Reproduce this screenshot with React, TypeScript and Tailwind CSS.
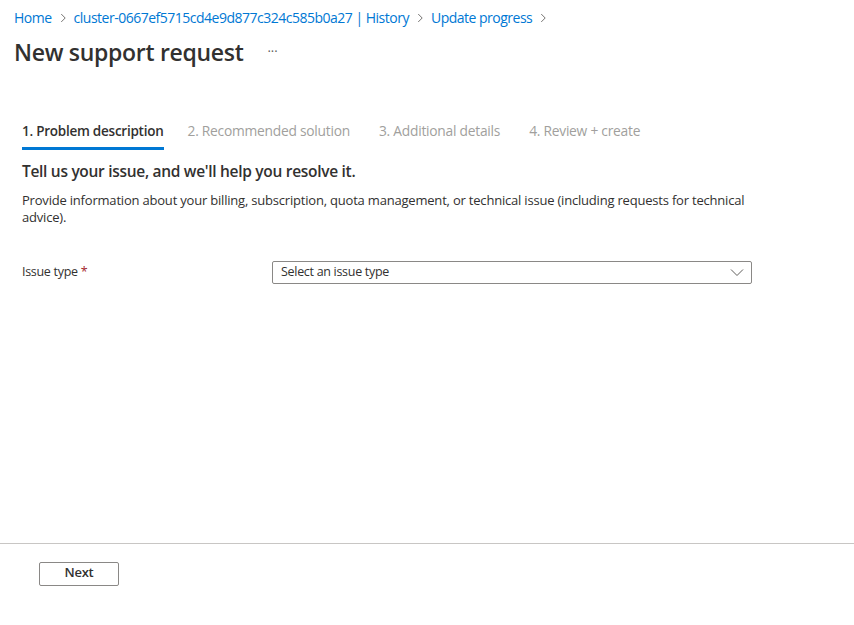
import React from 'react'

const Chevron = ({ className = '' }: { className?: string }) => (
  <svg viewBox="0 0 16 16" className={className} fill="none" stroke="currentColor" strokeWidth="1">
    <path d="M6 3.5 L10.5 8 L6 12.5" />
  </svg>
)

const App = () => {
  const tabs = ['1. Problem description', '2. Recommended solution', '3. Additional details', '4. Review + create']
  return (
    <div className="h-[625px] w-[854px] flex flex-col bg-white text-[#323130] font-['Open_Sans',sans-serif]">
      {/* HEADER */}
      <div className="pl-[14px] pt-[9px]">
        <div className="flex items-center text-[14px] leading-[18px] text-[#0078d4] tracking-[-0.5px]">
          <span>Home</span>
          <Chevron className="w-[14px] h-[14px] mx-[4px] text-[#605e5c]" />
          <span>cluster-0667ef5715cd4e9d877c324c585b0a27 | History</span>
          <Chevron className="w-[14px] h-[14px] mx-[4px] text-[#605e5c]" />
          <span>Update progress</span>
          <Chevron className="w-[14px] h-[14px] mx-[4px] text-[#605e5c]" />
        </div>
        <div className="flex items-center mt-[10px]">
          <h1 className="text-[23px] leading-[30px] font-semibold tracking-[-0.3px]">New support request</h1>
          <span className="ml-[24px] text-[13px] text-[#605e5c]">···</span>
        </div>
      </div>

      {/* MAIN */}
      <div className="flex-1 px-[22px] pt-[54px]">
        <div className="flex text-[13.5px] tracking-[-0.25px]">
          {tabs.map((t, i) => (
            <div
              key={t}
              className={
                i === 0
                  ? 'mr-[24px] pb-[5px] border-b-[3px] border-[#0078d4] font-semibold text-[#323130]'
                  : 'mr-[29px] pb-[5px] border-b-[3px] border-transparent text-[#a19f9d] text-[13.8px]'
              }
            >
              {t}
            </div>
          ))}
        </div>
        <h2 className="mt-[10px] text-[15.5px] font-semibold tracking-[-0.3px]">
          Tell us your issue, and we'll help you resolve it.
        </h2>
        <p className="mt-[9px] w-[740px] text-[13px] leading-[17px] tracking-[-0.2px]">
          Provide information about your billing, subscription, quota management, or technical issue (including requests for technical advice).
        </p>
        <div className="flex items-center mt-[35px]">
          <div className="w-[250px] text-[12.5px] tracking-[-0.3px]">
            Issue type <span className="text-[#a4262c]">*</span>
          </div>
          <div className="w-[480px] h-[23px] border border-[#8a8886] rounded-[2px] flex items-center justify-between pl-[8px] pr-[6px]">
            <span className="text-[12.5px] tracking-[-0.3px] text-[#323130]">Select an issue type</span>
            <svg viewBox="0 0 16 16" className="w-[16px] h-[16px] text-[#605e5c]" fill="none" stroke="currentColor" strokeWidth="1">
              <path d="M2 5.5 L8 11.5 L14 5.5" />
            </svg>
          </div>
        </div>
      </div>

      {/* FOOTER */}
      <div className="h-[82px] border-t border-[#c8c6c4] pl-[39px] pt-[18px]">
        <button className="w-[80px] h-[24px] flex items-center justify-center pb-[3px] border border-[#8a8886] rounded-[2px] text-[13px] font-semibold text-[#323130] tracking-[-0.3px]">
          Next
        </button>
      </div>
    </div>
  )
}

export default App
